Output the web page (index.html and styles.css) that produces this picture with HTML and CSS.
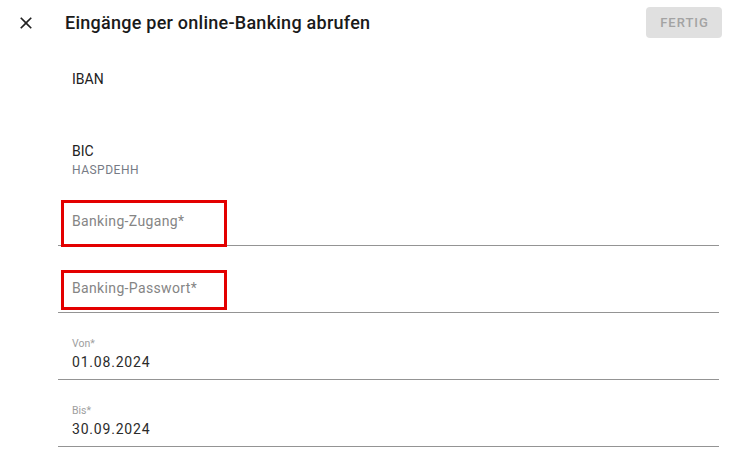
FILE: index.html
```html
<!DOCTYPE html>
<html lang="de">
<head>
<meta charset="utf-8">
<title>Eingänge per online-Banking abrufen</title>
<link rel="stylesheet" href="styles.css">
</head>
<body>
<div class="dialog">
  <header class="toolbar">
    <button class="icon-btn" aria-label="Schließen">
      <svg width="20" height="20" viewBox="0 0 24 24"><path d="M19 6.41L17.59 5 12 10.59 6.41 5 5 6.41 10.59 12 5 17.59 6.41 19 12 13.41 17.59 19 19 17.59 13.41 12z" fill="#212121"/></svg>
    </button>
    <h1 class="title">Eingänge per online-Banking abrufen</h1>
    <button class="done-btn" disabled>FERTIG</button>
  </header>
  <main class="content">
    <div class="info-list">
      <div class="info-item">
        <div class="info-label">IBAN</div>
      </div>
      <div class="info-item">
        <div class="info-label">BIC</div>
        <div class="info-value">HASPDEHH</div>
      </div>
    </div>
    <div class="field">
      <div class="placeholder">Banking-Zugang*</div>
      <div class="mark mark-first"></div>
    </div>
    <div class="field">
      <div class="placeholder">Banking-Passwort*</div>
      <div class="mark mark-second"></div>
    </div>
    <div class="field field-date">
      <div class="float-label">Von*</div>
      <div class="value">01.08.2024</div>
    </div>
    <div class="field field-date">
      <div class="float-label">Bis*</div>
      <div class="value">30.09.2024</div>
    </div>
  </main>
</div>
</body>
</html>
```

FILE: styles.css
```css
* { box-sizing: border-box; }
html, body {
  margin: 0;
  padding: 0;
  background: #ffffff;
  font-family: Roboto, "Noto Sans", "Liberation Sans", sans-serif;
  color: #212121;
}
.toolbar {
  height: 45px;
  display: flex;
  align-items: center;
  padding: 0 7px 0 16px;
}
.icon-btn {
  width: 20px;
  height: 20px;
  padding: 0;
  border: 0;
  background: none;
  display: flex;
}
.title {
  margin: 0 0 0 29px;
  font-size: 18px;
  line-height: 24px;
  font-weight: 500;
  letter-spacing: 0.25px;
  color: #1a1a1a;
  flex: 1;
}
.done-btn {
  width: 76px;
  height: 31px;
  border: 0;
  border-radius: 4px;
  background: #e0e0e0;
  color: #a3a3a3;
  font-family: Roboto, sans-serif;
  font-size: 13px;
  font-weight: 500;
  letter-spacing: 1px;
  padding: 0 0 0 1px;
}
.content {
  padding: 0 10px 0 58px;
}
.info-list {
  display: flex;
  flex-direction: column;
  gap: 56px;
  padding: 26px 0 2px 14px;
}
.info-label {
  font-size: 14px;
  line-height: 16px;
  color: #212121;
}
.info-value {
  margin-top: 4px;
  font-size: 12px;
  line-height: 14px;
  letter-spacing: 0.5px;
  color: #767b85;
}
.field {
  position: relative;
  height: 67px;
  border-bottom: 1px solid #949494;
  padding: 34px 0 0 14px;
}
.placeholder {
  font-size: 14px;
  line-height: 16px;
  letter-spacing: 0.35px;
  color: #858585;
}
.field-date {
  padding-top: 25px;
}
.float-label {
  font-size: 10.5px;
  line-height: 12px;
  color: #9e9e9e;
  margin-bottom: 4px;
}
.value {
  font-size: 14px;
  line-height: 16px;
  letter-spacing: 0.8px;
  color: #2b2b2b;
}
.mark {
  position: absolute;
  left: 3px;
  width: 166px;
  border: 3px solid #e30000;
}
.mark-first {
  top: 21px;
  height: 47px;
}
.mark-second {
  top: 24px;
  height: 40px;
}
```
